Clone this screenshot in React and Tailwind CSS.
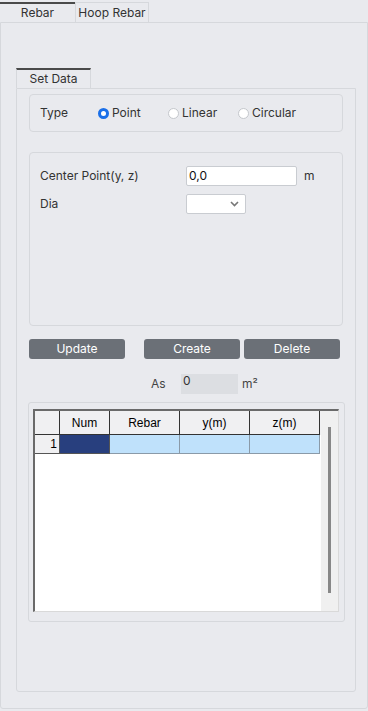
import React from 'react';

const RadioDot = ({ checked }) => (
  <span
    className={
      checked
        ? 'inline-block h-[11px] w-[11px] rounded-full border-[3px] border-[#1a6fe8] bg-white'
        : 'inline-block h-[11px] w-[11px] rounded-full border border-[#c4c7cc] bg-white'
    }
  />
);

const App = () => {
  const cols = [
    { label: 'Num', w: 'w-[50px]' },
    { label: 'Rebar', w: 'w-[70px]' },
    { label: 'y(m)', w: 'w-[70px]' },
    { label: 'z(m)', w: 'w-[70px]' },
  ];

  return (
    <div className="w-[368px] h-[711px] bg-[#e9eaee] text-[12px] text-[#333] font-['Inter','Noto_Sans',sans-serif]">
      {/* Top tabs */}
      <div className="flex h-[22px] pt-[2px]">
        <div className="w-[75px] border-t-2 border-[#4a4a4a] flex items-center justify-center text-[#333] leading-none pb-[1px]">
          Rebar
        </div>
        <div className="w-[74px] border border-b-0 border-[#d6d8dc] flex items-center justify-center leading-none">
          Hoop Rebar
        </div>
      </div>

      {/* Outer panel */}
      <div className="h-[687px] border border-[#d6d8dc] rounded-b-[3px] pl-[15px] pr-[11px] pt-[45px]">
        {/* Set Data tab */}
        <div className="w-[75px] h-[20px] border-t-2 border-x border-t-[#4a4a4a] border-x-[#d6d8dc] flex items-center justify-center leading-none">
          Set Data
        </div>
        <div className="h-[604px] border border-[#d6d8dc] rounded-b-[3px] pl-[12px] pr-[12px] pt-[5px]">
          {/* Type group */}
          <div className="h-[38px] border border-[#d6d8dc] rounded-[4px] flex items-center pl-[10px]">
            <span className="w-[58px]">Type</span>
            <label className="flex items-center gap-[3px] w-[70px]">
              <RadioDot checked />
              <span>Point</span>
            </label>
            <label className="flex items-center gap-[3px] w-[70px]">
              <RadioDot />
              <span>Linear</span>
            </label>
            <label className="flex items-center gap-[3px]">
              <RadioDot />
              <span>Circular</span>
            </label>
          </div>

          {/* Center point group */}
          <div className="mt-[20px] h-[174px] border border-[#d6d8dc] rounded-[4px] pl-[10px] pt-[13px]">
            <div className="flex items-center h-[20px]">
              <span className="w-[146px]">Center Point(y, z)</span>
              <div className="w-[111px] h-[20px] bg-white border border-[#c9ccd1] rounded-[2px] px-[2px] flex items-center text-[#111]">
                0,0
              </div>
              <span className="ml-[7px]">m</span>
            </div>
            <div className="flex items-center h-[20px] mt-[8px]">
              <span className="w-[146px]">Dia</span>
              <div className="w-[60px] h-[20px] bg-white border border-[#c9ccd1] rounded-[2px] flex items-center justify-end pr-[6px]">
                <svg width="9" height="6" viewBox="0 0 9 6">
                  <path d="M1 1l3.5 3.5L8 1" fill="none" stroke="#777" strokeWidth="1.6" />
                </svg>
              </div>
            </div>
          </div>

          {/* Buttons */}
          <div className="mt-[13px] flex items-center text-white">
            <button className="w-[96px] h-[20px] bg-[#6b7077] rounded-[3px] leading-none">Update</button>
            <button className="ml-[19px] w-[96px] h-[20px] bg-[#6b7077] rounded-[3px] leading-none">Create</button>
            <button className="ml-[4px] w-[96px] h-[20px] bg-[#6b7077] rounded-[3px] leading-none">Delete</button>
          </div>

          {/* As */}
          <div className="mt-[15px] flex items-center h-[20px] pl-[122px]">
            <span className="w-[30px] text-[#444]">As</span>
            <div className="w-[57px] h-[20px] bg-[#dcdee2] px-[2px] leading-[14px] text-[#333]">0</div>
            <span className="ml-[4px] text-[#444]">m²</span>
          </div>

          {/* Table group */}
          <div className="mt-[8px] -ml-[1px] w-[317px] h-[220px] border border-[#d6d8dc] rounded-[3px] pl-[4px] pt-[6px]">
            <div className="w-[306px] h-[203px] bg-white border-l-2 border-t-2 border-[#6a6a6a] border-r border-b border-r-[#d9d9d9] border-b-[#d9d9d9] flex font-['Liberation_Sans',Arial,sans-serif] text-[12px] text-black">
              <div className="flex-1">
                <div className="flex h-[24px] bg-[#f0f0f2]">
                  <div className="w-[25px] border-r border-b border-[#333]" />
                  {cols.map((c) => (
                    <div
                      key={c.label}
                      className={`${c.w} border-r border-b border-[#333] flex items-center justify-center`}
                    >
                      {c.label}
                    </div>
                  ))}
                </div>
                <div className="flex h-[19px]">
                  <div className="w-[25px] bg-[#f0f0f2] border-r border-b border-[#555] flex items-center justify-end pr-[2px]">
                    1
                  </div>
                  <div className="w-[50px] bg-[#283f7e] border-r border-b border-[#555]" />
                  <div className="w-[70px] bg-[#bfe1fb] border-r border-b border-[#8a9aa8]" />
                  <div className="w-[70px] bg-[#bfe1fb] border-r border-b border-[#8a9aa8]" />
                  <div className="w-[70px] bg-[#bfe1fb] border-r border-b border-[#8a9aa8]" />
                </div>
              </div>
              {/* Scrollbar */}
              <div className="w-[17px] bg-[#f0f0f0] flex justify-center pt-[16px]">
                <div className="w-[3px] h-[166px] bg-[#888]" />
              </div>
            </div>
          </div>
        </div>
      </div>
    </div>
  );
};

export default App;
